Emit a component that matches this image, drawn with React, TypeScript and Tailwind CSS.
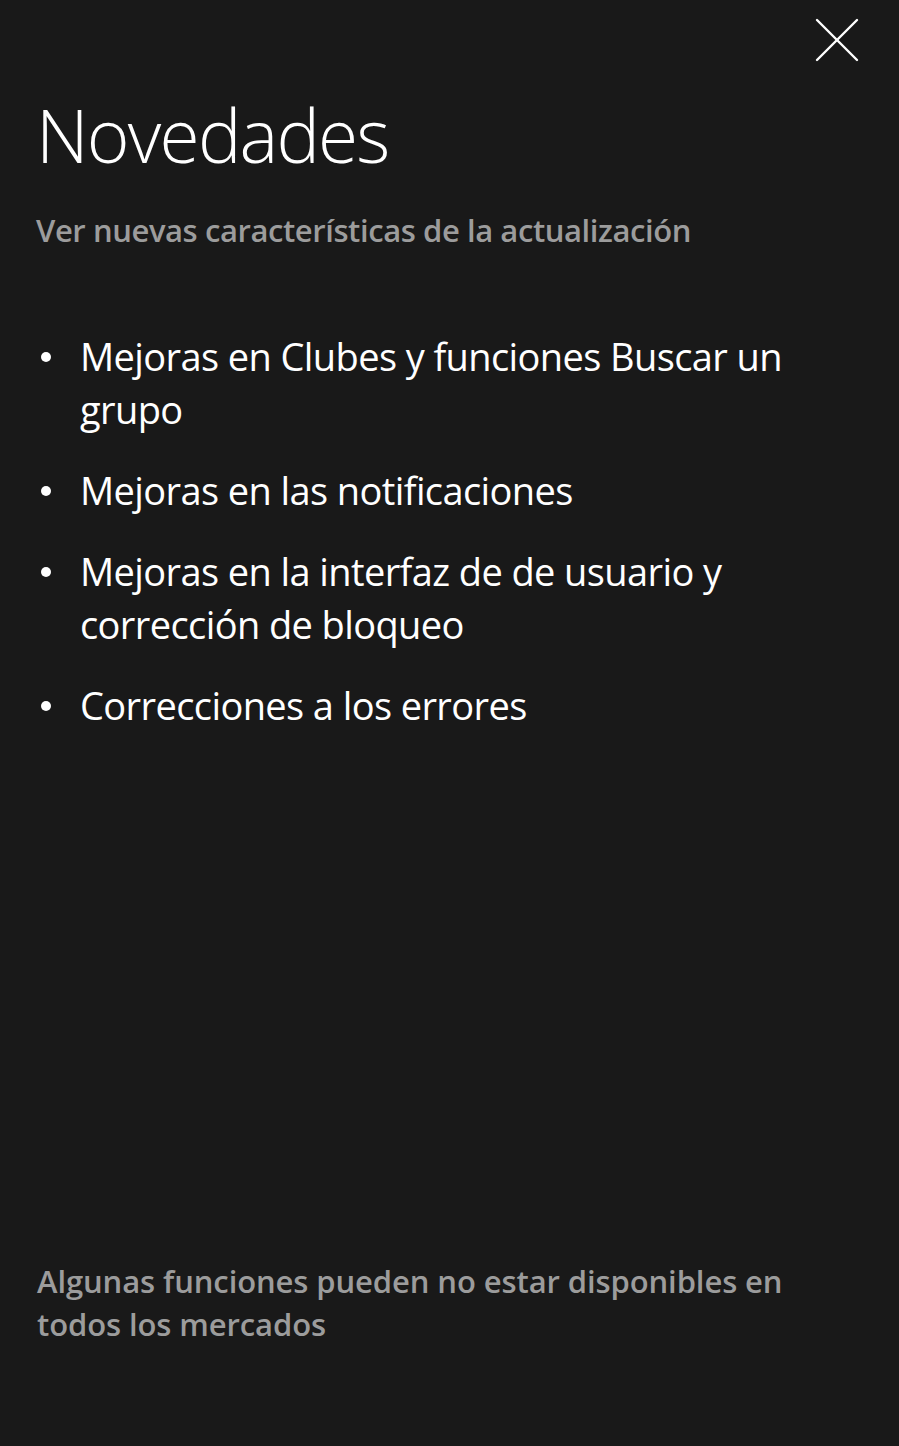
import React from 'react';

const items = [
  'Mejoras en Clubes y funciones Buscar un grupo',
  'Mejoras en las notificaciones',
  'Mejoras en la interfaz de de usuario y corrección de bloqueo',
  'Correcciones a los errores',
];

const CloseIcon: React.FC = () => (
  <svg width="44" height="44" viewBox="0 0 44 44" fill="none" stroke="#ffffff" strokeWidth="2.4" strokeLinecap="round">
    <path d="M2 2 L42 42" />
    <path d="M42 2 L2 42" />
  </svg>
);

const App: React.FC = () => {
  return (
    <div
      className="min-h-[1446px] w-full bg-[#191919] text-white flex flex-col relative"
      style={{ fontFamily: '"Open Sans", "Noto Sans", sans-serif' }}
    >
      <button className="absolute top-[18px] right-[40px]" aria-label="Cerrar">
        <CloseIcon />
      </button>

      <div className="pl-[36px] pr-[40px] pt-[98px]">
        <h1 className="text-[73px] leading-[1] font-light tracking-[-1.8px]">Novedades</h1>
        <p className="mt-[41px] text-[31px] leading-[1.2] font-semibold text-[#9c9c9c] tracking-[-0.42px]">
          Ver nuevas características de la actualización
        </p>

        <ul className="mt-[81px] flex flex-col gap-[28px] pr-[60px]">
          {items.map((t) => (
            <li key={t} className="flex items-start">
              <span className="w-[44px] shrink-0 pt-[22px] pl-[5px]">
                <span className="block w-[10px] h-[10px] rounded-full bg-white" />
              </span>
              <span className="text-[38px] leading-[53px] tracking-[-0.6px]">{t}</span>
            </li>
          ))}
        </ul>
      </div>

      <div className="mt-auto pl-[37px] pr-[100px] pb-[100px]">
        <p className="text-[31px] leading-[43px] font-semibold text-[#9c9c9c] tracking-[-0.1px]">
          Algunas funciones pueden no estar disponibles en todos los mercados
        </p>
      </div>
    </div>
  );
};

export default App;
